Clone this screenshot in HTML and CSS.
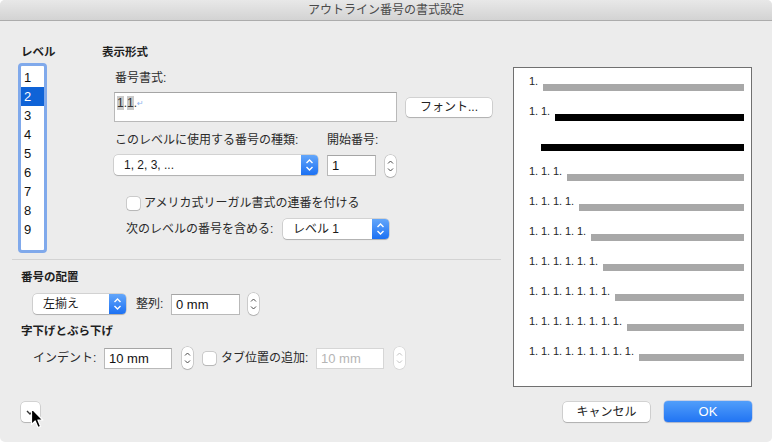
FILE: index.html
```html
<!DOCTYPE html>
<html lang="ja">
<head>
<meta charset="utf-8">
<title>アウトライン番号の書式設定</title>
<link rel="stylesheet" href="styles.css">
</head>
<body>
<div class="window">
  <div class="titlebar">アウトライン番号の書式設定</div>
  <div class="main">
    <div class="left">
      <div class="top">
        <div class="levels">
          <div class="hdr">レベル</div>
          <div class="listbox">
            <div class="item">1</div>
            <div class="item sel">2</div>
            <div class="item">3</div>
            <div class="item">4</div>
            <div class="item">5</div>
            <div class="item">6</div>
            <div class="item">7</div>
            <div class="item">8</div>
            <div class="item">9</div>
          </div>
        </div>
        <div class="format">
          <div class="hdr">表示形式</div>
          <div class="format-body">
            <div class="lbl lbl-fmt">番号書式:</div>
            <div class="fmt-row">
              <div class="field fmt-field"><span class="hl">1</span>.<span class="hl">1</span>.<span class="ret">↵</span></div>
              <div class="btn font-btn">フォント...</div>
            </div>
            <div class="kind-grid">
              <div class="lbl kind-lbl">このレベルに使用する番号の種類:</div>
              <div class="lbl start-lbl">開始番号:</div>
              <div class="popup kind-popup">
                <span class="ptxt">1, 2, 3, ...</span>
                <span class="parrow"><svg width="17" height="20" viewBox="0 0 17 20"><polyline points="5.5,8 8.5,5 11.5,8" fill="none" stroke="#fff" stroke-width="1.4"/><polyline points="5.5,12 8.5,15 11.5,12" fill="none" stroke="#fff" stroke-width="1.4"/></svg></span>
              </div>
              <div class="field num-field">1</div>
              <div class="stepper"><svg width="11" height="22" viewBox="0 0 11 22"><polyline points="3,8.5 5.5,6 8,8.5" fill="none" stroke="#4a4a4a" stroke-width="1"/><polyline points="3,13.5 5.5,16 8,13.5" fill="none" stroke="#4a4a4a" stroke-width="1"/></svg></div>
            </div>
            <div class="check-row">
              <span class="checkbox"></span>
              <span class="lbl">アメリカ式リーガル書式の連番を付ける</span>
            </div>
            <div class="include-row">
              <span class="lbl include-lbl">次のレベルの番号を含める:</span>
              <div class="popup level-popup">
                <span class="ptxt">レベル 1</span>
                <span class="parrow"><svg width="17" height="20" viewBox="0 0 17 20"><polyline points="5.5,8 8.5,5 11.5,8" fill="none" stroke="#fff" stroke-width="1.4"/><polyline points="5.5,12 8.5,15 11.5,12" fill="none" stroke="#fff" stroke-width="1.4"/></svg></span>
              </div>
            </div>
          </div>
        </div>
      </div>
      <div class="sep"></div>
      <div class="hdr sect-hdr">番号の配置</div>
      <div class="ctrl-row">
        <div class="popup align-popup">
          <span class="ptxt">左揃え</span>
          <span class="parrow"><svg width="17" height="20" viewBox="0 0 17 20"><polyline points="5.5,8 8.5,5 11.5,8" fill="none" stroke="#fff" stroke-width="1.4"/><polyline points="5.5,12 8.5,15 11.5,12" fill="none" stroke="#fff" stroke-width="1.4"/></svg></span>
        </div>
        <span class="lbl align-lbl">整列:</span>
        <div class="field mm-field">0 mm</div>
        <div class="stepper"><svg width="11" height="22" viewBox="0 0 11 22"><polyline points="3,8.5 5.5,6 8,8.5" fill="none" stroke="#4a4a4a" stroke-width="1"/><polyline points="3,13.5 5.5,16 8,13.5" fill="none" stroke="#4a4a4a" stroke-width="1"/></svg></div>
      </div>
      <div class="hdr sect-hdr">字下げとぶら下げ</div>
      <div class="ctrl-row">
        <span class="lbl indent-lbl">インデント:</span>
        <div class="field mm-field indent-field">10 mm</div>
        <div class="stepper"><svg width="11" height="22" viewBox="0 0 11 22"><polyline points="3,8.5 5.5,6 8,8.5" fill="none" stroke="#4a4a4a" stroke-width="1"/><polyline points="3,13.5 5.5,16 8,13.5" fill="none" stroke="#4a4a4a" stroke-width="1"/></svg></div>
        <span class="checkbox tab-check"></span>
        <span class="lbl tab-lbl">タブ位置の追加:</span>
        <div class="field mm-field indent-field disabled">10 mm</div>
        <div class="stepper disabled"><svg width="11" height="22" viewBox="0 0 11 22"><polyline points="3,8.5 5.5,6 8,8.5" fill="none" stroke="#c2c2c2" stroke-width="1"/><polyline points="3,13.5 5.5,16 8,13.5" fill="none" stroke="#c2c2c2" stroke-width="1"/></svg></div>
      </div>
    </div>
    <div class="preview">
      <div class="prow"><span class="ptext">1.</span><span class="bar"></span></div>
      <div class="prow"><span class="ptext">1. 1.</span><span class="bar black"></span></div>
      <div class="prow cont"><span class="bar black"></span></div>
      <div class="prow"><span class="ptext">1. 1. 1.</span><span class="bar"></span></div>
      <div class="prow"><span class="ptext">1. 1. 1. 1.</span><span class="bar"></span></div>
      <div class="prow"><span class="ptext">1. 1. 1. 1. 1.</span><span class="bar"></span></div>
      <div class="prow"><span class="ptext">1. 1. 1. 1. 1. 1.</span><span class="bar"></span></div>
      <div class="prow"><span class="ptext">1. 1. 1. 1. 1. 1. 1.</span><span class="bar"></span></div>
      <div class="prow"><span class="ptext">1. 1. 1. 1. 1. 1. 1. 1.</span><span class="bar"></span></div>
      <div class="prow"><span class="ptext">1. 1. 1. 1. 1. 1. 1. 1. 1.</span><span class="bar"></span></div>
    </div>
  </div>
  <div class="footer">
    <div class="disclosure"><svg width="19" height="20" viewBox="0 0 19 20"><polyline points="6,9 9,12 12,9" fill="none" stroke="#333" stroke-width="1.4"/></svg></div>
    <div class="spacer"></div>
    <div class="btn cancel-btn">キャンセル</div>
    <div class="btn ok-btn">OK</div>
    <svg class="cursor" width="15" height="23" viewBox="0 0 15 23"><path d="M1.5 1.5 L1.5 17.5 L5.2 14 L8 20.5 L10.6 19.4 L7.9 13 L12.8 13 Z" fill="#000" stroke="#fff" stroke-width="1.2" stroke-linejoin="round"/></svg>
  </div>
</div>
</body>
</html>
```

FILE: styles.css
```css
* { box-sizing: border-box; }
html, body { margin: 0; padding: 0; background: #ffffff; }
body {
  font-family: "Liberation Sans", "Noto Sans CJK JP", sans-serif;
  color: #262626;
}
.window {
  width: 772px;
  height: 442px;
  background: #ececec;
  border-radius: 5px;
  overflow: hidden;
  display: flex;
  flex-direction: column;
}
.titlebar {
  height: 21px;
  flex: none;
  background: linear-gradient(#e8e8e8, #d3d3d3);
  border-bottom: 1px solid #acacac;
  text-align: center;
  font-size: 12px;
  line-height: 21px;
  color: #4a4a4a;
}
.main {
  display: flex;
  padding: 0 20px 0 12px;
}
.left { width: 489px; flex: none; }
.top { display: flex; padding-left: 6px; }
.hdr {
  font-size: 11.5px;
  font-weight: bold;
  line-height: 16px;
  color: #1f1f1f;
  margin-top: 23px;
}
.levels { width: 29px; flex: none; }
.levels .hdr { padding-left: 3px; white-space: nowrap; }
.listbox {
  margin-top: 3px;
  height: 190px;
  border: 3px solid #80a9eb;
  border-radius: 4px;
  background: #fff;
  padding-top: 2px;
}
.item {
  height: 19px;
  line-height: 19px;
  font-size: 13px;
  padding-left: 3px;
  color: #111;
}
.item.sel { background: #0f63d7; color: #fff; }
.format { margin-left: 55px; flex: 1; }
.format-body { margin-left: 12px; }
.lbl { font-size: 12px; line-height: 16px; white-space: nowrap; color: #2a2a2a; }
.lbl-fmt { margin-top: 10px; padding-left: 1px; }
.fmt-row { display: flex; align-items: center; gap: 9px; margin-top: 6px; }
.field {
  background: #fff;
  border: 1px solid #b9b9b9;
  border-top-color: #a5a5a5;
  font-size: 13px;
  line-height: 19px;
  padding-left: 4px;
  color: #111;
}
.fmt-field {
  width: 283px;
  height: 30px;
  font-size: 12px;
  line-height: 14px;
  padding: 3px 2px;
  color: #333;
}
.hl { background: #c9c9c9; }
.ret { font-family: "DejaVu Sans", sans-serif; font-size: 8px; color: #8db3ee; vertical-align: 1px; }
.btn {
  background: #fff;
  border-radius: 4px;
  box-shadow: 0 0 0 0.5px rgba(0,0,0,0.22), 0 1px 1px rgba(0,0,0,0.16);
  font-size: 12px;
  text-align: center;
  color: #222;
}
.font-btn { width: 86px; height: 19px; line-height: 19px; }
.kind-grid {
  display: grid;
  grid-template-columns: 204px 49px 11px;
  column-gap: 9px;
  row-gap: 7px;
  margin-top: 10px;
  align-items: start;
}
.kind-lbl { padding-left: 1px; }
.start-lbl { grid-column: 2 / 4; }
.popup {
  display: flex;
  height: 20px;
  background: #fff;
  border-radius: 4px;
  box-shadow: 0 0 0 0.5px rgba(0,0,0,0.22), 0 1px 1px rgba(0,0,0,0.16);
}
.ptxt {
  flex: 1;
  font-size: 12px;
  line-height: 20px;
  padding-left: 10px;
  color: #1a1a1a;
  white-space: nowrap;
}
.parrow {
  width: 17px;
  height: 20px;
  flex: none;
  border-radius: 0 4px 4px 0;
  background: linear-gradient(#63a6fa, #1c71f3);
  display: block;
}
.parrow svg { display: block; }
.num-field { width: 49px; height: 21px; }
.stepper {
  width: 11px;
  height: 22px;
  background: #fff;
  border-radius: 5px;
  box-shadow: 0 0 0 0.5px rgba(0,0,0,0.25), 0 1px 1px rgba(0,0,0,0.12);
}
.stepper svg { display: block; }
.check-row {
  display: flex;
  align-items: center;
  gap: 4px;
  height: 16px;
  margin-top: 18px;
  padding-left: 13px;
}
.checkbox {
  display: block;
  width: 13px;
  height: 13px;
  flex: none;
  background: #fff;
  border-radius: 3px;
  box-shadow: 0 0 0 0.5px rgba(0,0,0,0.28), 0 1px 1px rgba(0,0,0,0.1);
}
.include-row {
  display: flex;
  align-items: center;
  height: 20px;
  margin-top: 8px;
  padding-left: 12px;
}
.include-lbl { width: 157px; }
.level-popup { width: 106px; }
.sep { height: 1px; background: #d3d3d3; margin-top: 6px; }
.sect-hdr { margin-top: 9px; padding-left: 9px; }
.sect-hdr + .ctrl-row { margin-top: 8px; }
.ctrl-row + .sect-hdr { margin-top: 8px; }
.ctrl-row {
  display: flex;
  align-items: center;
  padding-left: 21px;
  height: 22px;
}
.align-popup { width: 93px; }
.align-lbl { margin-left: 10px; width: 35px; }
.mm-field { width: 69px; height: 21px; }
.mm-field + .stepper { margin-left: 8px; }
.indent-lbl { width: 71px; }
.indent-field { width: 68px; }
.indent-field + .stepper { margin-left: 10px; }
.tab-check { margin-left: 10px; }
.tab-lbl { margin-left: 5px; width: 95px; }
.field.disabled { color: #b5b5b5; border-color: #d6d6d6; }
.stepper.disabled { box-shadow: 0 0 0 0.5px rgba(0,0,0,0.14); }
.preview {
  width: 239px;
  height: 320px;
  flex: none;
  margin-left: 12px;
  margin-top: 46px;
  background: #fff;
  border: 1px solid #707070;
  padding: 7px 7px 0 15px;
}
.prow { display: flex; height: 30px; align-items: flex-start; }
.ptext {
  font-family: "Liberation Sans", sans-serif;
  font-size: 11px;
  line-height: 13px;
  color: #262626;
  white-space: pre;
  word-spacing: -0.25px;
}
.bar {
  flex: 1;
  height: 7px;
  margin-top: 9px;
  margin-left: 5px;
  background: #a8a8a8;
}
.bar.black { background: #000; }
.prow.cont .bar { margin-left: 12px; }
.footer {
  position: relative;
  display: flex;
  align-items: center;
  height: 21px;
  margin-top: auto;
  margin-bottom: 20px;
  padding: 0 20px 0 21px;
}
.disclosure {
  width: 19px;
  height: 20px;
  background: #fff;
  border-radius: 4px;
  box-shadow: 0 0 0 0.5px rgba(0,0,0,0.22), 0 1px 1px rgba(0,0,0,0.14);
}
.disclosure svg { display: block; }
.spacer { flex: 1; }
.cancel-btn { width: 87px; height: 20px; line-height: 20px; }
.ok-btn {
  width: 88px;
  height: 21px;
  line-height: 21px;
  margin-left: 14px;
  background: linear-gradient(#519efa, #2174f3);
  color: #fff;
  font-size: 13px;
  box-shadow: 0 0 0 0.5px rgba(0,60,200,0.3), 0 1px 1px rgba(0,0,0,0.14);
}
.cursor { position: absolute; left: 30px; top: 6px; }
```
